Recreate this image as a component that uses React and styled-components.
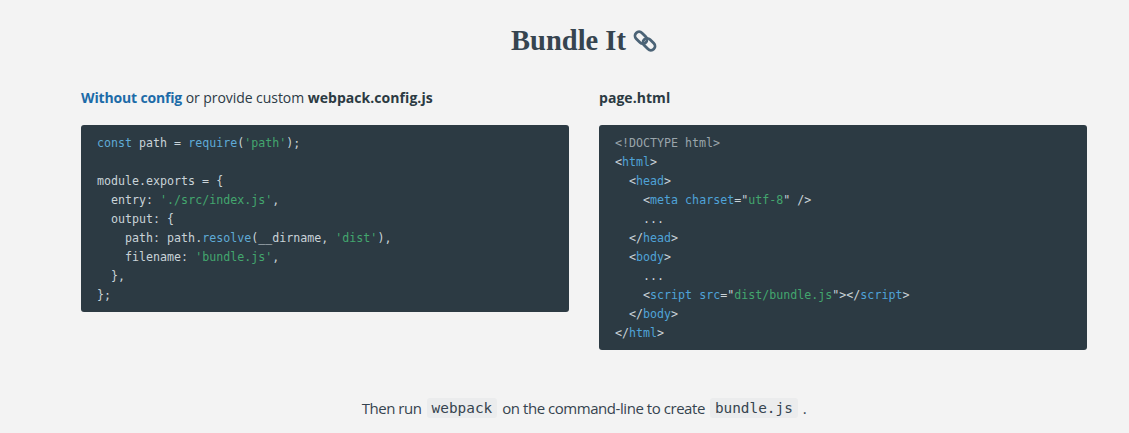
import React from "react";
import styled, { createGlobalStyle } from "styled-components";

const GlobalStyle = createGlobalStyle`
  html, body {
    margin: 0;
    padding: 0;
    background: #f3f3f3;
  }
  body {
    font-family: "Open Sans", "Liberation Sans", sans-serif;
    color: #2c3a45;
  }
`;

const Page = styled.div`
  width: 1129px;
  height: 433px;
  overflow: hidden;
  box-sizing: border-box;
  padding: 20px 42px 0 81px;
`;

const Heading = styled.h1`
  display: flex;
  justify-content: center;
  align-items: center;
  gap: 7px;
  margin: 0 0 28px;
  height: 41px;
  font-family: "Liberation Serif", serif;
  font-size: 28.5px;
  font-weight: 700;
  color: #36444f;
`;

const Columns = styled.div`
  display: grid;
  grid-template-columns: 488px 488px;
  column-gap: 30px;
  align-items: start;
`;

const Caption = styled.p`
  margin: 0 0 18px;
  height: 18px;
  line-height: 18px;
  font-size: 14px;
  letter-spacing: -0.06px;
  color: #2c3a45;
`;

const Strong = styled.strong`
  font-weight: 700;
  letter-spacing: 0.05px;
  color: #2b3a42;
`;

const CaptionLink = styled.a`
  font-weight: 700;
  letter-spacing: -0.16px;
  color: #1c6ba8;
`;

const Code = styled.pre`
  margin: 0;
  padding: 9px 16px 7px;
  background: #2c3a43;
  border-radius: 3px;
  font-family: "DejaVu Sans Mono", monospace;
  font-size: 11.65px;
  line-height: 19px;
  color: #c9d3d8;
`;

const Token = styled.span`
  color: ${({ kind }) =>
    ({
      keyword: "#5faad6",
      string: "#43a66e",
      comment: "#9aa5ab",
      tag: "#4fa3d8",
    })[kind]};
`;

const Footer = styled.p`
  display: flex;
  justify-content: center;
  align-items: center;
  gap: 5px;
  margin: 46px 0 0;
  height: 24px;
  font-size: 15px;
  letter-spacing: -0.45px;
  color: #36444f;
`;

const InlineCode = styled.code`
  padding: 2px 5px;
  background: #ebeced;
  border-radius: 3px;
  font-family: "DejaVu Sans Mono", monospace;
  font-size: 14.4px;
  letter-spacing: 0;
  color: #36444f;
`;

const LinkIcon = () => (
  <svg width="24" height="24" viewBox="0 0 24 24" fill="none" stroke="#4b6376" strokeWidth="2.8">
    <rect x="1.2" y="4.6" width="13.6" height="8.2" rx="4.1" transform="rotate(45 8 8.7)" />
    <rect x="9.2" y="11.2" width="13.6" height="8.2" rx="4.1" transform="rotate(45 16 15.3)" />
  </svg>
);

const App = () => (
  <Page>
    <GlobalStyle />
    <Heading>
      Bundle It <LinkIcon />
    </Heading>
    <Columns>
      <div>
        <Caption>
          <CaptionLink>Without config</CaptionLink> or provide custom <Strong>webpack.config.js</Strong>
        </Caption>
        <Code>
          <Token kind="keyword">const</Token> path = <Token kind="keyword">require</Token>(<Token kind="string">'path'</Token>);{"\n"}
          {"\n"}
          module.exports = {"{"}{"\n"}
          {"  "}entry: <Token kind="string">'./src/index.js'</Token>,{"\n"}
          {"  "}output: {"{"}{"\n"}
          {"    "}path: path.<Token kind="keyword">resolve</Token>(__dirname, <Token kind="string">'dist'</Token>),{"\n"}
          {"    "}filename: <Token kind="string">'bundle.js'</Token>,{"\n"}
          {"  "}{"},"}{"\n"}
          {"};"}
        </Code>
      </div>
      <div>
        <Caption>
          <Strong>page.html</Strong>
        </Caption>
        <Code>
          <Token kind="comment">{"<!DOCTYPE html>"}</Token>{"\n"}
          {"<"}<Token kind="tag">html</Token>{">"}{"\n"}
          {"  <"}<Token kind="tag">head</Token>{">"}{"\n"}
          {"    <"}<Token kind="tag">meta</Token> <Token kind="tag">charset</Token>="<Token kind="string">utf-8</Token>" {"/>"}{"\n"}
          {"    ..."}{"\n"}
          {"  </"}<Token kind="tag">head</Token>{">"}{"\n"}
          {"  <"}<Token kind="tag">body</Token>{">"}{"\n"}
          {"    ..."}{"\n"}
          {"    <"}<Token kind="tag">script</Token> <Token kind="tag">src</Token>="<Token kind="string">dist/bundle.js</Token>"{"></"}<Token kind="tag">script</Token>{">"}{"\n"}
          {"  </"}<Token kind="tag">body</Token>{">"}{"\n"}
          {"</"}<Token kind="tag">html</Token>{">"}
        </Code>
      </div>
    </Columns>
    <Footer>
      Then run <InlineCode>webpack</InlineCode> on the command-line to create <InlineCode>bundle.js</InlineCode> .
    </Footer>
  </Page>
);

export default App;
